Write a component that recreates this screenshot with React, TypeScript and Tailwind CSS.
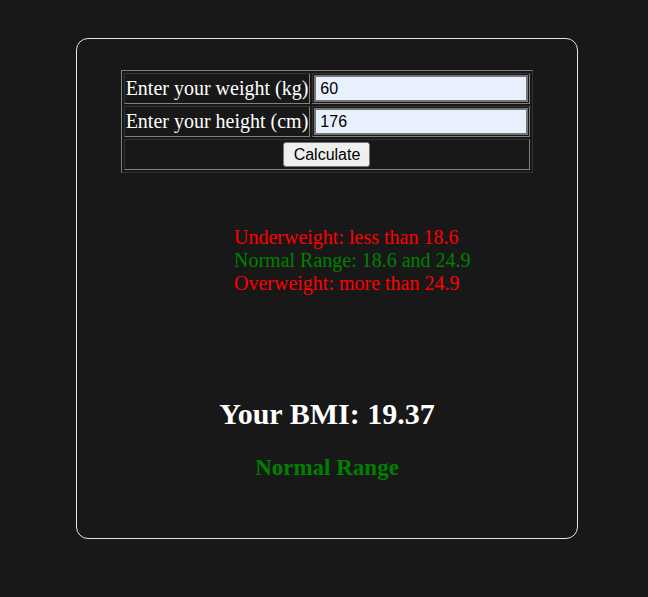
export default function App() {
  const cellBorder =
    "border border-t-[#333333] border-l-[#333333] border-b-[#808080] border-r-[#808080] p-[1px]";

  return (
    <div className="min-h-[597px] w-full bg-[#181818] pt-[38px] pl-[76px] font-['Liberation_Serif',serif]">
      <div className="flex h-[501px] w-[502px] flex-col rounded-[12px] border border-[#e6e6e6] pt-[31px]">
        <table className="mx-auto border-separate border-spacing-[2px] border border-t-[#808080] border-l-[#808080] border-b-[#333333] border-r-[#333333] text-[20px] text-white">
          <tbody>
            <tr>
              <td className={`${cellBorder} h-[31px] leading-[23px]`}>Enter your weight (kg)</td>
              <td className={cellBorder}>
                <input
                  defaultValue="60"
                  className="block h-[27px] w-[214px] border-2 border-[#767676] bg-[#e8f0fe] pl-[4px] pr-[2px] font-['Liberation_Sans',sans-serif] text-[16px] text-black outline-none"
                />
              </td>
            </tr>
            <tr>
              <td className={`${cellBorder} h-[31px] leading-[23px]`}>Enter your height (cm)</td>
              <td className={cellBorder}>
                <input
                  defaultValue="176"
                  className="block h-[27px] w-[214px] border-2 border-[#767676] bg-[#e8f0fe] pl-[4px] pr-[2px] font-['Liberation_Sans',sans-serif] text-[16px] text-black outline-none"
                />
              </td>
            </tr>
            <tr>
              <td colSpan={2} className={`${cellBorder} h-[31px] text-center`}>
                <button className="mx-auto flex h-[25px] w-[87px] items-center justify-center rounded-[3px] border border-[#767676] bg-[#efefef] font-['Liberation_Sans',sans-serif] text-[16px] text-black">
                  Calculate
                </button>
              </td>
            </tr>
          </tbody>
        </table>

        <div className="mt-[53px] pl-[157px] text-[20px] leading-[23px]">
          <p className="text-[#ff0000]">Underweight: less than 18.6</p>
          <p className="text-[#008000]">Normal Range: 18.6 and 24.9</p>
          <p className="text-[#ff0000]">Overweight: more than 24.9</p>
        </div>

        <h1 className="mt-[101px] text-center text-[30px] font-bold leading-[35px] text-white">
          Your BMI: 19.37
        </h1>
        <h2 className="mt-[23px] text-center text-[23px] font-bold leading-[28px] text-[#008000]">
          Normal Range
        </h2>
      </div>
    </div>
  );
}
